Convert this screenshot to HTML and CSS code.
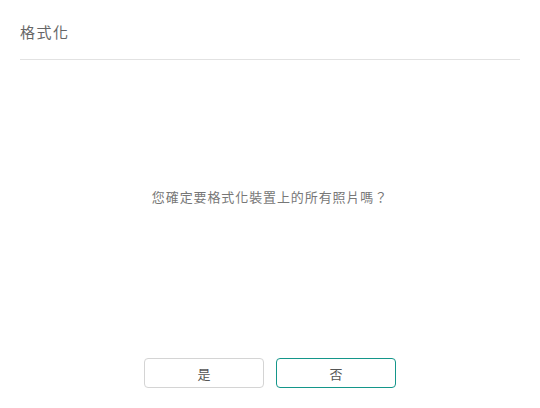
FILE: index.html
```html
<!DOCTYPE html>
<html lang="zh-Hant">
<head>
    <meta charset="utf-8">
    <title>格式化</title>
    <link rel="stylesheet" href="styles.css">
</head>
<body>
<div class="dialog">
    <div class="dialog-header">格式化</div>
    <div class="dialog-body">
        <p class="message">您確定要格式化裝置上的所有照片嗎？</p>
    </div>
    <div class="dialog-footer">
        <button class="btn">是</button>
        <button class="btn btn-primary">否</button>
    </div>
</div>
</body>
</html>
```

FILE: styles.css
```css
html, body { margin: 0; height: 100%; background: #fff; }
body { font-family: "Noto Sans CJK TC", "Noto Sans", sans-serif; color: #555; }
.dialog { height: 408px; box-sizing: border-box; padding: 0 20px 20px; display: flex; flex-direction: column; }
.dialog-header { font-size: 15px; line-height: 22px; padding: 21px 0 16px; border-bottom: 1px solid #e2e2e2; color: #666; letter-spacing: 1.5px; }
.dialog-body { flex: 1; display: flex; align-items: center; justify-content: center; padding-bottom: 26px; }
.message { margin: 0; font-size: 13px; color: #777; letter-spacing: 0.9px; }
.dialog-footer { display: flex; justify-content: center; gap: 12px; }
.btn { width: 120px; height: 30px; border: 1px solid #d4d4d4; border-radius: 4px; background: #fff; font-family: inherit; font-size: 13px; color: #555; cursor: pointer; padding: 0; }
.btn-primary { border-color: #14968a; }
```
